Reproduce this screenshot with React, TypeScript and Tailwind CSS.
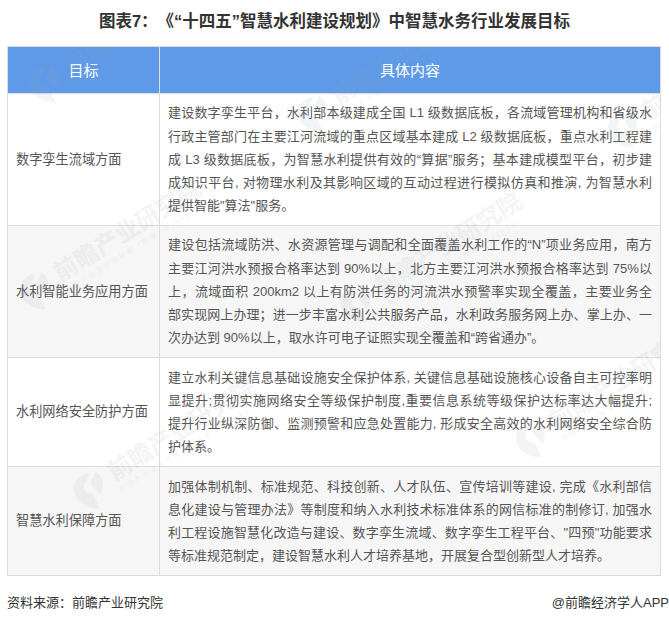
import React from 'react';

const rows = [
  {
    title: '数字孪生流域方面',
    height: 'h-[131px]',
    lines: [
      '建设数字孪生平台，水利部本级建成全国 L1 级数据底板，各流域管理机构和省级水',
      '行政主管部门在主要江河流域的重点区域基本建成 L2 级数据底板，重点水利工程建',
      '成 L3 级数据底板，为智慧水利提供有效的“算据”服务；基本建成模型平台，初步建',
      '成知识平台, 对物理水利及其影响区域的互动过程进行模拟仿真和推演, 为智慧水利',
    ],
    last: '提供智能"算法"服务。',
  },
  {
    title: '水利智能业务应用方面',
    height: 'h-[131px]',
    lines: [
      '建设包括流域防洪、水资源管理与调配和全面覆盖水利工作的“N”项业务应用，南方',
      '主要江河洪水预报合格率达到 90%以上，北方主要江河洪水预报合格率达到 75%以',
      '上，流域面积 200km2 以上有防洪任务的河流洪水预警率实现全覆盖，主要业务全',
      '部实现网上办理；进一步丰富水利公共服务产品，水利政务服务网上办、掌上办、一',
    ],
    last: '次办达到 90%以上，取水许可电子证照实现全覆盖和“跨省通办”。',
    shaded: true,
  },
  {
    title: '水利网络安全防护方面',
    height: 'h-[108px]',
    lines: [
      '建立水利关键信息基础设施安全保护体系, 关键信息基础设施核心设备自主可控率明',
      '显提升;贯彻实施网络安全等级保护制度,重要信息系统等级保护达标率达大幅提升;',
      '提升行业纵深防御、监测预警和应急处置能力, 形成安全高效的水利网络安全综合防',
    ],
    last: '护体系。',
  },
  {
    title: '智慧水利保障方面',
    height: 'h-[108px]',
    lines: [
      '加强体制机制、标准规范、科技创新、人才队伍、宣传培训等建设, 完成《水利部信',
      '息化建设与管理办法》等制度和纳入水利技术标准体系的网信标准的制修订, 加强水',
      '利工程设施智慧化改造与建设、数字孪生流域、数字孪生工程平台、"四预"功能要求',
    ],
    last: '等标准规范制定，建设智慧水利人才培养基地，开展复合型创新型人才培养。',
    shaded: true,
  },
];

// watermark positions, relative to the table's top-left corner
const marks = [
  'left-[21px] top-[18px]',
  'left-[289px] top-[48px]',
  'left-[599px] top-[63px]',
  'left-[11px] top-[225px]',
  'left-[332px] top-[238px]',
  'left-[507px] top-[373px]',
  'left-[65px] top-[424px]',
];

const Watermark = ({ className }: { className: string }) => (
  <div className={`absolute flex items-center gap-[7px] origin-[18px_20px] -rotate-[32deg] whitespace-nowrap text-[#9aa3ad] opacity-[0.11] ${className}`}>
    <svg viewBox="0 0 40 48" className="w-[36px] h-[40px] shrink-0" fill="currentColor">
      <path d="M20 2C9 2 1 11 1 22c0 10 7 20 17 25l2-20c-4-1-6-4-6-8 0-4 3-7 7-8l9-6c-3-2-6-3-10-3z" />
      <path d="M24 16l13-9c2 4 3 9 1 14-2 6-6 10-11 13z" />
    </svg>
    <div className="flex flex-col">
      <span className="text-[24px] leading-[28px] font-bold">前瞻产业研究院</span>
      <span className="text-[7px] leading-[9px] tracking-[2px]">中国产业咨询领导者（股票：839599）</span>
    </div>
  </div>
);

export default function App() {
  return (
    <div className="w-[669px] h-[624px] bg-white overflow-hidden font-['Liberation_Sans','Noto_Sans_CJK_SC',sans-serif] [text-spacing-trim:space-all]">
      <h1 className="h-[46px] pt-[8px] text-center text-[16.5px] leading-[26px] font-bold text-[#333]">
        图表7：《“十四五”智慧水利建设规划》中智慧水务行业发展目标
      </h1>
      <div className="relative ml-[7px] w-[654px] border border-[#dcdcdc] overflow-hidden">
        <div className="flex h-[47px] bg-[#5f9ae8] text-white text-[15px] border-b border-[#dcdcdc]">
          <div className="w-[152px] pt-[3px] flex items-center justify-center border-r border-[#dcdcdc]">目标</div>
          <div className="flex-1 pt-[3px] flex items-center justify-center">具体内容</div>
        </div>
        {rows.map((row, i) => (
          <div
            key={row.title}
            className={`flex ${row.height} border-[#dcdcdc] ${i < rows.length - 1 ? 'border-b box-content' : ''} ${row.shaded ? 'bg-[#f6f6f6]' : 'bg-white'}`}
          >
            <div className="w-[152px] pl-[8px] flex items-center border-r border-[#dcdcdc] text-[13.2px] text-[#555]">
              {row.title}
            </div>
            <div className="flex-1 px-[8px] flex flex-col justify-center text-[13px] leading-[23.2px] text-[#555]">
              {row.lines.map((line) => (
                <div key={line} className="whitespace-nowrap text-justify [text-align-last:justify]">{line}</div>
              ))}
              <div className="whitespace-nowrap">{row.last}</div>
            </div>
          </div>
        ))}
        {marks.map((m) => (
          <Watermark key={m} className={m} />
        ))}
      </div>
      <div className="ml-[7px] mt-[17px] flex justify-between text-[13px] leading-[20px] text-[#333]">
        <span>资料来源：前瞻产业研究院</span>
        <span>@前瞻经济学人APP</span>
      </div>
    </div>
  );
}
